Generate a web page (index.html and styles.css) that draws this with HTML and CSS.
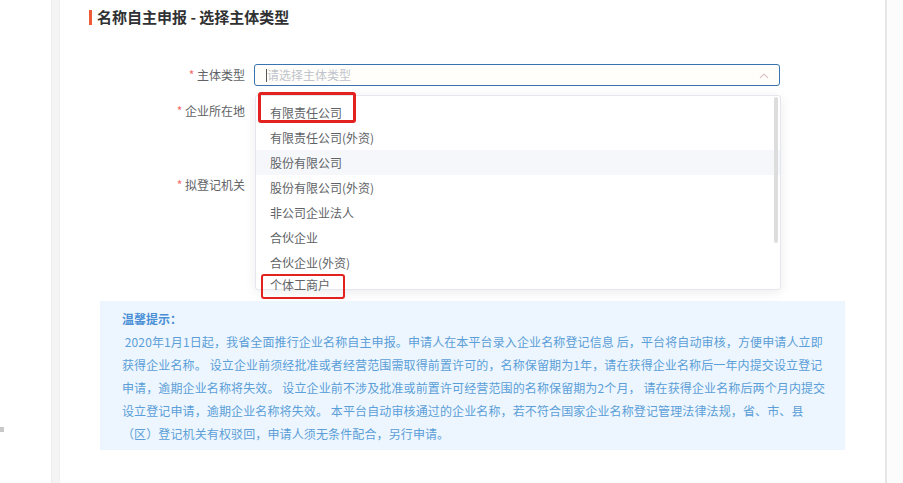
FILE: index.html
```html
<!DOCTYPE html>
<html lang="zh-CN">
<head>
<meta charset="utf-8">
<title>名称自主申报</title>
<link rel="stylesheet" href="styles.css">
</head>
<body>
<div class="page">
  <div class="side-left"><span class="side-mark"></span></div>
  <div class="side-strip"></div>
  <main class="card">
    <h2 class="title"><span class="title-bar"></span>名称自主申报 - 选择主体类型</h2>
    <form class="form">
      <div class="row row-type">
        <label class="label"><span class="star">*</span> 主体类型</label>
        <div class="control">
          <div class="select">
            <span class="caret"></span><span class="placeholder">请选择主体类型</span>
            <svg class="chev" width="10" height="6" viewBox="0 0 10 6"><path d="M1 5 L5 1 L9 5" fill="none" stroke="#dcc4cb" stroke-width="1.2"/></svg>
          </div>
          <div class="dropdown">
            <ul class="options">
              <li class="opt">有限责任公司</li>
              <li class="opt">有限责任公司(外资)</li>
              <li class="opt hover">股份有限公司</li>
              <li class="opt">股份有限公司(外资)</li>
              <li class="opt">非公司企业法人</li>
              <li class="opt">合伙企业</li>
              <li class="opt">合伙企业(外资)</li>
              <li class="opt last">个体工商户</li>
            </ul>
            <span class="scrollbar"></span>
          </div>
          <span class="mark mark-1"></span>
          <span class="mark mark-2"></span>
        </div>
      </div>
      <div class="row row-area">
        <label class="label"><span class="star">*</span> 企业所在地</label>
      </div>
      <div class="row row-org">
        <label class="label"><span class="star">*</span> 拟登记机关</label>
      </div>
    </form>
    <section class="notice">
      <h3 class="notice-title">温馨提示：</h3>
      <p class="notice-text">&nbsp;2020年1月1日起，我省全面推行企业名称自主申报。申请人在本平台录入企业名称登记信息 后，平台将自动审核，方便申请人立即<br>获得企业名称。 设立企业前须经批准或者经营范围需取得前置许可的，名称保留期为1年，请在获得企业名称后一年内提交设立登记<br>申请，逾期企业名称将失效。 设立企业前不涉及批准或前置许可经营范围的名称保留期为2个月， 请在获得企业名称后两个月内提交<br>设立登记申请，逾期企业名称将失效。 本平台自动审核通过的企业名称，若不符合国家企业名称登记管理法律法规，省、市、县<br>（区）登记机关有权驳回，申请人须无条件配合，另行申请。</p>
    </section>
  </main>
  <div class="side-right"></div>
</div>
</body>
</html>
```
FILE: styles.css
```css
* { box-sizing: border-box; }
html, body { margin: 0; padding: 0; }
body {
  background: #ffffff;
  font-family: "Noto Sans CJK SC", "Noto Sans", sans-serif;
  font-size: 12px;
  color: #606266;
  width: 903px;
  height: 483px;
  overflow: hidden;
}
.page {
  display: flex;
  height: 483px;
}
.side-left {
  width: 51px;
  flex: none;
  padding-top: 427px;
}
.side-mark {
  display: block;
  width: 4px;
  height: 5px;
  background: #c8c8c8;
}
.side-strip {
  width: 9px;
  flex: none;
  background: #f4f4f4;
  border-left: 1px solid #ececec;
  border-right: 1px solid #efefef;
}
.card {
  width: 825px;
  flex: none;
  background: #fff;
  padding-left: 29px;
  position: relative;
}
.side-right {
  flex: 1;
  background: #fcfcfc;
  border-left: 2px solid #e6e6e6;
}
.title {
  margin: 0;
  height: 35px;
  padding-top: 6px;
  display: flex;
  align-items: flex-start;
  font-size: 15px;
  font-weight: bold;
  color: #303133;
  line-height: 22px;
}
.title-bar {
  width: 3px;
  height: 15px;
  margin-top: 4px;
  margin-right: 5px;
  background: #ef5b35;
}
.form {
  margin: 0;
  padding-top: 29px;
}
.row {
  display: flex;
  align-items: flex-start;
}
.row-type { height: 36px; }
.row-area { height: 74px; }
.row-org { height: 127px; }
.label {
  width: 156px;
  text-align: right;
  line-height: 22px;
  color: #606266;
  flex: none;
}
.star { color: #f56c6c; }
.control {
  margin-left: 9px;
  position: relative;
}
.select {
  width: 526px;
  height: 22px;
  border: 1px solid #3a74b0;
  border-radius: 3px;
  background: #fffefa;
  display: flex;
  align-items: center;
  padding-left: 11px;
  position: relative;
}
.caret {
  width: 1px;
  height: 13px;
  background: #555;
}
.placeholder {
  color: #c0c4cc;
  line-height: 20px;
}
.chev {
  position: absolute;
  right: 10px;
  top: 8px;
}
.dropdown {
  position: absolute;
  left: 1px;
  top: 31px;
  width: 526px;
  height: 195px;
  background: #fff;
  border: 1px solid #e4e7ed;
  border-radius: 3px;
  box-shadow: 0 2px 12px rgba(0, 0, 0, 0.08);
  z-index: 5;
}
.options {
  list-style: none;
  margin: 0;
  padding: 4px 0 0;
}
.opt {
  height: 25px;
  line-height: 25px;
  padding-left: 14px;
  color: #606266;
  white-space: nowrap;
}
.opt.last {
  height: 17px;
  line-height: 20px;
}
.opt.hover { background: #f5f7fa; }
.scrollbar {
  position: absolute;
  right: 2px;
  top: 1px;
  width: 4px;
  height: 146px;
  background: #dddddd;
  border-radius: 2px;
}
.mark {
  position: absolute;
  border: 3px solid #e3211f;
  border-radius: 3px;
  z-index: 6;
}
.mark-1 {
  left: 4px;
  top: 28px;
  width: 98px;
  height: 31px;
}
.mark-2 {
  left: 7px;
  top: 210px;
  width: 84px;
  height: 25px;
  border-width: 2.5px;
}
.notice {
  width: 745px;
  margin-left: 11px;
  background: #edf6fe;
  padding: 6px 10px 5px 22px;
}
.notice-title {
  margin: 0;
  font-size: 12px;
  font-weight: bold;
  line-height: 23px;
  color: #4a8fd6;
}
.notice-text {
  margin: 0;
  line-height: 23px;
  color: #5b9ed8;
  white-space: nowrap;
  letter-spacing: 0.12px;
}
```
